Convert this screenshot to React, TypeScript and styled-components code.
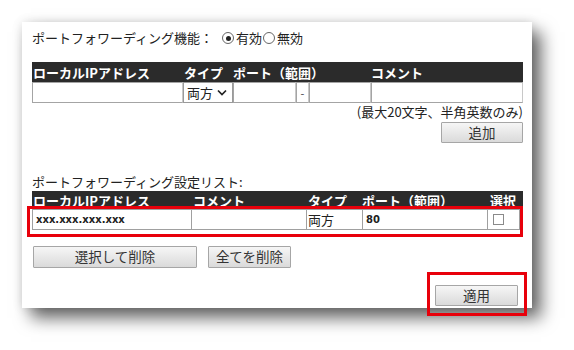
import React from 'react'
import styled, { createGlobalStyle } from 'styled-components'

const GlobalStyle = createGlobalStyle`
  body {
    margin: 0;
    background: #ffffff;
    font-family: 'Noto Sans CJK JP', 'Noto Sans', sans-serif;
    color: #222;
  }
`

const Page = styled.div`
  width: 574px;
  height: 350px;
  padding: 22px 0 0 22px;
  box-sizing: border-box;
  overflow: hidden;
`

const Panel = styled.div`
  width: 510px;
  height: 286px;
  box-sizing: border-box;
  padding: 8px 9px 0 10px;
  background: #fff;
  box-shadow: 9px 10px 16px rgba(0, 0, 0, 0.6), 0 0 10px rgba(0, 0, 0, 0.12);
  display: flex;
  flex-direction: column;
`

const Line = styled.div`
  display: flex;
  align-items: center;
  height: 16px;
  font-size: 13px;
  line-height: 16px;
  white-space: nowrap;
`

const RadioGroup = styled.div`
  display: flex;
  align-items: center;
  margin-left: 9px;
`

const Radio = styled.span<{ $checked?: boolean }>`
  width: 10px;
  height: 10px;
  border: 1px solid #666;
  border-radius: 50%;
  margin-right: 2px;
  position: relative;
  background: #fff;

  &::after {
    content: '';
    display: ${({ $checked }) => ($checked ? 'block' : 'none')};
    position: absolute;
    left: 2.5px;
    top: 2.5px;
    width: 5px;
    height: 5px;
    border-radius: 50%;
    background: #222;
  }
`

const HeadRow = styled.div<{ $cols: string; $h: number }>`
  display: grid;
  grid-template-columns: ${({ $cols }) => $cols};
  height: ${({ $h }) => $h}px;
  align-items: center;
  background: #2b2b2b;
  color: #fff;
  font-size: 13px;
  font-weight: 700;
  white-space: nowrap;
`

const HeadCell = styled.div<{ $span?: number; $pad?: number }>`
  grid-column: span ${({ $span }) => $span ?? 1};
  padding-left: ${({ $pad }) => $pad ?? 1}px;
`

const InputRow = styled.div<{ $cols: string }>`
  display: grid;
  grid-template-columns: ${({ $cols }) => $cols};
  height: 21px;
`

const InputCell = styled.div`
  border: 1px solid #a4a4a4;
  border-right-color: #c8c8c8;
  background: #fff;
  display: flex;
  align-items: center;
  justify-content: center;
  font-size: 11px;
  color: #444;
`

const SelectBox = styled.div`
  border: 1px solid #9a9a9a;
  background: #fff;
  display: flex;
  align-items: center;
  padding-left: 3px;
  gap: 4px;
  font-size: 13px;
`

const Note = styled.div`
  text-align: right;
  font-size: 13px;
  line-height: 16px;
  margin-top: 1px;
  white-space: nowrap;
`

const ButtonRow = styled.div<{ $end?: boolean; $top: number }>`
  display: flex;
  justify-content: ${({ $end }) => ($end ? 'flex-end' : 'flex-start')};
  gap: 11px;
  margin-top: ${({ $top }) => $top}px;
`

const Button = styled.button<{ $w: number; $h?: number }>`
  width: ${({ $w }) => $w}px;
  height: ${({ $h }) => $h ?? 21}px;
  padding: 0;
  margin: 0;
  border: 1px solid #a6a6a6;
  border-radius: 1px;
  background: linear-gradient(#f6f6f6, #dadada);
  font-family: 'Noto Sans CJK JP', sans-serif;
  font-size: 13.5px;
  color: #333;
  line-height: 1;
`

const ListTitle = styled(Line)`
  margin-top: 31px;
  margin-bottom: 1px;
`

const MarkFrame = styled.div`
  border: 3px solid #e8000b;
  margin: -1px 0 0 -5px;
  padding: 0 0 4px 2px;
`

const DataRow = styled.div<{ $cols: string }>`
  display: grid;
  grid-template-columns: ${({ $cols }) => $cols};
  height: 19px;
  border: 1px solid #a0a0a0;
  border-right: none;
  background: #fff;
`

const DataCell = styled.div<{ $mono?: boolean }>`
  border-right: 1px solid #a0a0a0;
  display: flex;
  align-items: center;
  padding-left: ${({ $mono }) => ($mono ? 3 : 1)}px;
  font-family: ${({ $mono }) =>
    $mono ? "'DejaVu Sans', 'Noto Sans CJK JP', sans-serif" : "'Noto Sans CJK JP', sans-serif"};
  font-size: ${({ $mono }) => ($mono ? 10 : 13)}px;
  font-weight: ${({ $mono }) => ($mono ? 700 : 400)};
  color: #222;
`

const Check = styled.span`
  width: 9px;
  height: 9px;
  border: 1px solid #8a8a8a;
  margin-left: 4px;
  background: #fff;
`

const ApplyFrame = styled.div`
  align-self: flex-end;
  border: 3px solid #e8000b;
  padding: 7px 6px 7px 5px;
  margin: 4px -4px 0 0;
`

const Chevron = () => (
  <svg width="10" height="7" viewBox="0 0 10 7">
    <path d="M1 1.5 L5 5.5 L9 1.5" fill="none" stroke="#222" strokeWidth="1.7" />
  </svg>
)

const topCols = '151px 50px 63px 13px 62px 1fr'
const listCols = '159px 115px 56px 125px 1fr'

export default function App() {
  return (
    <Page>
      <GlobalStyle />
      <Panel>
        <Line>
          ポートフォワーディング機能：
          <RadioGroup>
            <Radio $checked />
            有効
            <Radio style={{ marginLeft: 1 }} />
            無効
          </RadioGroup>
        </Line>

        <div style={{ marginTop: 16 }}>
          <HeadRow $cols={topCols} $h={20}>
            <HeadCell>ローカルIPアドレス</HeadCell>
            <HeadCell>タイプ</HeadCell>
            <HeadCell $span={3} $pad={0}>
              ポート（範囲）
            </HeadCell>
            <HeadCell $pad={0}>コメント</HeadCell>
          </HeadRow>
          <InputRow $cols={topCols}>
            <InputCell />
            <SelectBox>
              両方
              <Chevron />
            </SelectBox>
            <InputCell />
            <InputCell>-</InputCell>
            <InputCell />
            <InputCell />
          </InputRow>
        </div>

        <Note>(最大20文字、半角英数のみ)</Note>
        <ButtonRow $end $top={2}>
          <Button $w={82}>追加</Button>
        </ButtonRow>

        <ListTitle>ポートフォワーディング設定リスト:</ListTitle>
        <HeadRow $cols={listCols} $h={16}>
          <HeadCell>ローカルIPアドレス</HeadCell>
          <HeadCell $pad={2}>コメント</HeadCell>
          <HeadCell $pad={2}>タイプ</HeadCell>
          <HeadCell $pad={0}>ポート（範囲）</HeadCell>
          <HeadCell $pad={3}>選択</HeadCell>
        </HeadRow>
        <MarkFrame>
          <DataRow $cols={listCols}>
            <DataCell $mono>xxx.xxx.xxx.xxx</DataCell>
            <DataCell />
            <DataCell>両方</DataCell>
            <DataCell $mono>80</DataCell>
            <DataCell>
              <Check />
            </DataCell>
          </DataRow>
        </MarkFrame>

        <ButtonRow $top={9}>
          <Button $w={164} $h={22} style={{ marginLeft: 1 }}>
            選択して削除
          </Button>
          <Button $w={83} $h={22}>
            全てを削除
          </Button>
        </ButtonRow>

        <ApplyFrame>
          <Button $w={83}>適用</Button>
        </ApplyFrame>
      </Panel>
    </Page>
  )
}
